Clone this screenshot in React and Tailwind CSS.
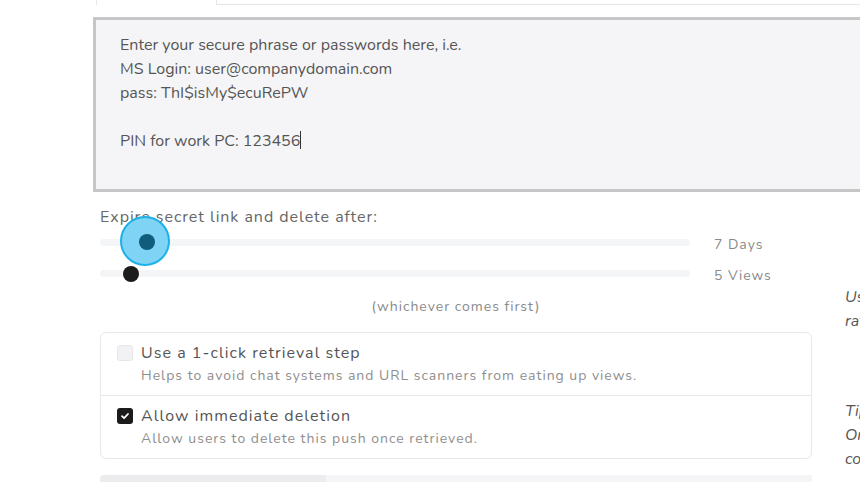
import React from 'react';

const font = { fontFamily: '"Nunito", "Lato", "Noto Sans", sans-serif' };

function Slider({ label, children }) {
    return (
        <div className="flex items-center h-[31px]">
            <div className="relative w-[590px] h-[7px] rounded-full bg-[#f4f5f7]">{children}</div>
            <span className="relative top-[2px] ml-[24px] text-[14px] tracking-[0.07em] text-[#8a8a8a]">{label}</span>
        </div>
    );
}

function Option({ checked, title, hint, last }) {
    return (
        <div className={`flex px-[16px] pt-[10px] pb-[9px] ${last ? '' : 'border-b border-[#e8e8ea]'}`}>
            <div className="pt-[2px]">
                {checked ? (
                    <div className="w-[16px] h-[16px] rounded-[3px] bg-[#1b1b1b] flex items-center justify-center">
                        <svg width="10" height="10" viewBox="0 0 10 10">
                            <path d="M2 5.2 L4.1 7.2 L8 3" fill="none" stroke="white" strokeWidth="1.8" strokeLinecap="round" strokeLinejoin="round" />
                        </svg>
                    </div>
                ) : (
                    <div className="w-[16px] h-[16px] rounded-[3px] bg-[#f2f2f4] border border-[#e6e6e8]" />
                )}
            </div>
            <div className="ml-[8px]">
                <div className="text-[16px] leading-[20px] tracking-[0.065em] text-[#555]">{title}</div>
                <div className="mt-[3px] text-[14px] leading-[20px] tracking-[0.07em] text-[#8e8e8e]">{hint}</div>
            </div>
        </div>
    );
}

export default function App() {
    return (
        <div className="w-[860px] h-[482px] overflow-hidden bg-white" style={font}>
            {/* Tabs */}
            <div className="flex h-[5px]">
                <div className="w-[96px]" />
                <div className="w-[121px] border-x border-[#e6e6e8]" />
                <div className="flex-1 border-b border-[#e6e6e8]" />
            </div>

            {/* Secret textarea */}
            <div className="mt-[12px] ml-[93px] w-[800px] h-[175px] border-[3px] border-[#c6c6c6] bg-[#f5f5f7] pl-[24px] pt-[13px] text-[16px] leading-[24px] text-[#555] whitespace-pre">
                {'Enter your secure phrase or passwords here, i.e.\nMS Login: user@companydomain.com\npass: ThI$isMy$ecuRePW\n\nPIN for work PC: 123456'}
                <span className="inline-block w-[1px] h-[18px] bg-[#333] align-[-3px]" />
            </div>

            <div className="flex">
                {/* Main column */}
                <div className="ml-[100px] w-[712px] shrink-0">
                    <div className="mt-[15px] text-[16px] leading-[20px] tracking-[0.06em] text-[#666]">
                        Expire secret link and delete after:
                    </div>
                    <div className="mt-[0px]">
                        <Slider label="7 Days">
                            <div className="absolute left-[20px] top-[-23px] w-[50px] h-[50px] rounded-full bg-[#7fd4f6] border-[2px] border-[#1eb0e8] flex items-center justify-center">
                                <div className="w-[16px] h-[16px] rounded-full bg-[#0f5c7c] ml-[3px] mt-[2px]" />
                            </div>
                        </Slider>
                        <Slider label="5 Views">
                            <div className="absolute left-[23px] top-[-4px] w-[16px] h-[16px] rounded-full bg-[#1b1b1b]" />
                        </Slider>
                    </div>
                    <div className="mt-[9px] text-center text-[14px] leading-[18px] tracking-[0.07em] text-[#8a8a8a]">
                        (whichever comes first)
                    </div>

                    <div className="mt-[16px] w-[712px] rounded-[6px] border border-[#e8e8ea]">
                        <Option
                            checked={false}
                            title="Use a 1-click retrieval step"
                            hint="Helps to avoid chat systems and URL scanners from eating up views."
                        />
                        <Option
                            checked
                            last
                            title="Allow immediate deletion"
                            hint="Allow users to delete this push once retrieved."
                        />
                    </div>

                    <div className="mt-[16px] flex h-[10px]">
                        <div className="w-[226px] bg-[#ececee] rounded-tl-[4px]" />
                        <div className="flex-1 bg-[#f5f5f7]" />
                    </div>
                </div>

                {/* Side notes */}
                <div className="ml-[33px] shrink-0 text-[16px] leading-[24px] italic text-[#555] whitespace-nowrap">
                    <div className="mt-[93px]">Use either limit to expire,</div>
                    <div>rather than keeping it forever.</div>
                    <div className="mt-[66px]">Tip: links expire by default.</div>
                    <div>One view is often enough to</div>
                    <div>complete a handover.</div>
                </div>
            </div>
        </div>
    );
}
